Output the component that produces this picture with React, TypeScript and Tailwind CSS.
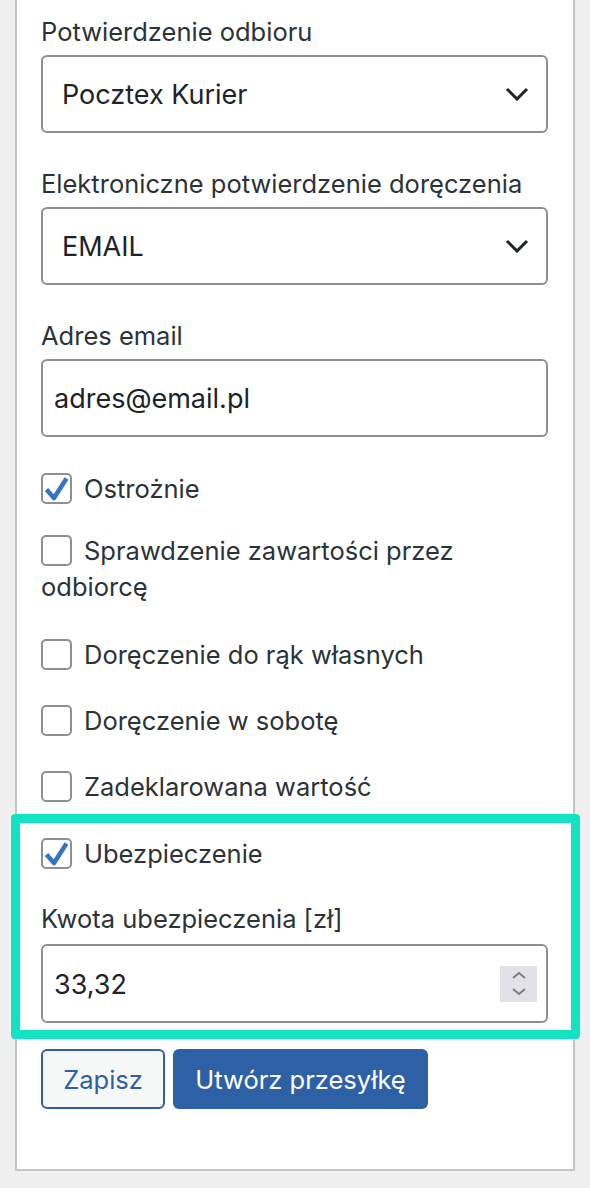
import type { ReactNode } from "react";

const font = { fontFamily: "Inter, 'Noto Sans', sans-serif" };

function Chevron() {
  return (
    <svg width="24" height="14" viewBox="0 0 24 14" className="shrink-0">
      <polyline points="2,2 12,12 22,2" fill="none" stroke="#1d2327" strokeWidth="3" />
    </svg>
  );
}

function Select({ value }: { value: string }) {
  return (
    <div className="flex h-[78px] items-center justify-between rounded-[6px] border-2 border-[#8c8f94] bg-white pl-[19px] pr-[17px] text-[27px] text-[#1d2327]">
      <span className="pt-[3px]">{value}</span>
      <Chevron />
    </div>
  );
}

function Label({ children, className = "" }: { children: ReactNode; className?: string }) {
  return <div className={`text-[25.5px] leading-[30px] text-[#2c3338] ${className}`}>{children}</div>;
}

function Checkbox({ checked, children, className = "" }: { checked?: boolean; children: ReactNode; className?: string }) {
  return (
    <div className={`text-[25.5px] leading-[36px] text-[#2c3338] ${className}`}>
      <span className="relative top-[2px] mr-[12px] inline-block h-[31px] w-[31px] rounded-[5px] border-2 border-[#8c8f94] bg-white align-top">
        {checked && (
          <svg width="27" height="27" viewBox="0 0 27 27" className="absolute left-0 top-0">
            <path d="M3.5 14.5 L11 23 L23.5 3.5" fill="none" stroke="#3474c2" strokeWidth="4.5" strokeLinejoin="round" />
          </svg>
        )}
      </span>
      {children}
    </div>
  );
}

function Spinner() {
  return (
    <div className="flex h-[36px] w-[37px] flex-col items-center justify-center gap-[9px] bg-[#e2e1e7]">
      <svg width="14" height="7" viewBox="0 0 14 7">
        <polyline points="1,6 7,1 13,6" fill="none" stroke="#7d7d84" strokeWidth="2" />
      </svg>
      <svg width="14" height="7" viewBox="0 0 14 7">
        <polyline points="1,1 7,6 13,1" fill="none" stroke="#7d7d84" strokeWidth="2" />
      </svg>
    </div>
  );
}

export default function App() {
  return (
    <div className="h-[1188px] overflow-hidden bg-[#f0f0f1]" style={font}>
      <div className="ml-[15px] w-[560px] border-2 border-t-0 border-[#c3c4c7] bg-white pb-[60px] pl-[24px] pr-[25px] pt-[17px]">
        <Label className="mb-[8px]">Potwierdzenie odbioru</Label>
        <Select value="Pocztex Kurier" />

        <Label className="mb-[8px] mt-[36px]">Elektroniczne potwierdzenie doręczenia</Label>
        <Select value="EMAIL" />

        <Label className="mb-[8px] mt-[36px]">Adres email</Label>
        <div className="flex h-[78px] items-center rounded-[6px] border-2 border-[#8c8f94] bg-white pl-[11px] pt-[3px] text-[27px] text-[#1d2327]">
          adres@email.pl
        </div>

        <Checkbox checked className="mt-[34px]">Ostrożnie</Checkbox>
        <Checkbox className="mt-[26px]">Sprawdzenie zawartości przez odbiorcę</Checkbox>
        <Checkbox className="mt-[32px]">Doręczenie do rąk własnych</Checkbox>
        <Checkbox className="mt-[30px]">Doręczenie w sobotę</Checkbox>
        <Checkbox className="mt-[30px]">Zadeklarowana wartość</Checkbox>

        <div className="-ml-[30px] -mr-[32px] mt-[9px] rounded-[4px] border-[9px] border-[#12e3c3] bg-white pb-[7px] pl-[21px] pr-[23px] pt-[13px]">
          <Checkbox checked>Ubezpieczenie</Checkbox>
          <Label className="mb-[10px] mt-[32px]">Kwota ubezpieczenia [zł]</Label>
          <div className="flex h-[79px] items-center justify-between rounded-[6px] border-2 border-[#8c8f94] bg-white pl-[11px] pr-[9px] text-[27px] text-[#1d2327]">
            <span className="pt-[3px]">33,32</span>
            <Spinner />
          </div>
        </div>

        <div className="mt-[10px] flex gap-[8px]">
          <button className="h-[60px] w-[124px] rounded-[6px] border-2 border-[#2c5fa5] bg-[#f6f7f7] pt-[2px] text-[25.5px] text-[#2c5fa5]">
            Zapisz
          </button>
          <button className="h-[60px] w-[255px] rounded-[6px] bg-[#2e60a6] pt-[2px] text-[25.5px] text-white">
            Utwórz przesyłkę
          </button>
        </div>
      </div>
    </div>
  );
}
